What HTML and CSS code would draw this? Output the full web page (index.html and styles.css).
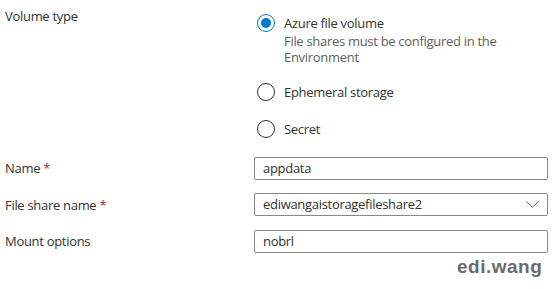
FILE: index.html
```html
<!DOCTYPE html>
<html lang="en">
<head>
  <meta charset="UTF-8">
  <meta name="viewport" content="width=device-width, initial-scale=1.0">
  <title>Volume settings</title>
  <link rel="stylesheet" href="styles.css">
</head>
<body>
<div class="form">
  <!-- Volume type -->
  <div class="row row-top">
    <div class="label">Volume type</div>
    <div class="radio-group">
      <label class="radio checked">
        <span class="radio-circle"></span>
        <span class="radio-text">
          <span class="radio-title">Azure file volume</span>
          <span class="radio-desc">File shares must be configured in the Environment</span>
        </span>
      </label>
      <label class="radio">
        <span class="radio-circle"></span>
        <span class="radio-text"><span class="radio-title">Ephemeral storage</span></span>
      </label>
      <label class="radio">
        <span class="radio-circle"></span>
        <span class="radio-text"><span class="radio-title">Secret</span></span>
      </label>
    </div>
  </div>

  <!-- Fields -->
  <div class="fields">
    <div class="row">
      <div class="label">Name <span class="required">*</span></div>
      <div class="input">appdata</div>
    </div>
    <div class="row">
      <div class="label">File share name <span class="required">*</span></div>
      <div class="input select">
        <span>ediwangaistoragefileshare2</span>
        <svg class="chevron" width="13" height="7" viewBox="0 0 13 7">
          <path d="M0.5 0.5 L6.5 6 L12.5 0.5" fill="none" stroke="#605e5c" stroke-width="1"/>
        </svg>
      </div>
    </div>
    <div class="row">
      <div class="label">Mount options</div>
      <div class="input">nobrl</div>
    </div>
  </div>
</div>

<div class="watermark">edi.wang</div>
</body>
</html>
```

FILE: styles.css
```css
body, html {
  margin: 0;
  padding: 0;
  font-family: "Open Sans", sans-serif;
  font-size: 13px;
  letter-spacing: -0.3px;
  color: #323130;
  background: white;
}

.form {
  padding: 6px 0 0 5px;
  width: 543px;
}

.row {
  display: grid;
  grid-template-columns: 249px 294px;
  align-items: center;
}

.row-top {
  align-items: start;
}

.label {
  line-height: 20px;
}

.required {
  color: #a4262c;
}

.radio-group {
  display: flex;
  flex-direction: column;
  gap: 17px;
  padding-top: 7px;
  padding-left: 3px;
}

.radio {
  display: flex;
  align-items: flex-start;
  gap: 9px;
}

.radio-circle {
  width: 16px;
  height: 16px;
  border: 1px solid #323130;
  border-radius: 50%;
  margin-top: 1px;
  position: relative;
  flex-shrink: 0;
}

.radio.checked .radio-circle {
  border-color: #0078d4;
}

.radio.checked .radio-circle::after {
  content: "";
  position: absolute;
  left: 3px;
  top: 3px;
  width: 10px;
  height: 10px;
  border-radius: 50%;
  background: #0078d4;
}

.radio-text {
  display: flex;
  flex-direction: column;
}

.radio-title {
  line-height: 20px;
}

.radio-desc {
  color: #605e5c;
  line-height: 16px;
  width: 240px;
}

.fields {
  display: flex;
  flex-direction: column;
  gap: 13.5px;
  margin-top: 17.5px;
}

.input {
  height: 23px;
  box-sizing: border-box;
  border: 1px solid #8a8886;
  border-radius: 2px;
  padding: 0 8px;
  line-height: 21px;
}

.select {
  display: flex;
  align-items: center;
  justify-content: space-between;
}

.watermark {
  position: absolute;
  left: 457px;
  top: 256px;
  font-family: "Liberation Sans", Arial, sans-serif;
  font-weight: bold;
  font-size: 19px;
  letter-spacing: 0.5px;
  color: #6b6b6b;
}
```
